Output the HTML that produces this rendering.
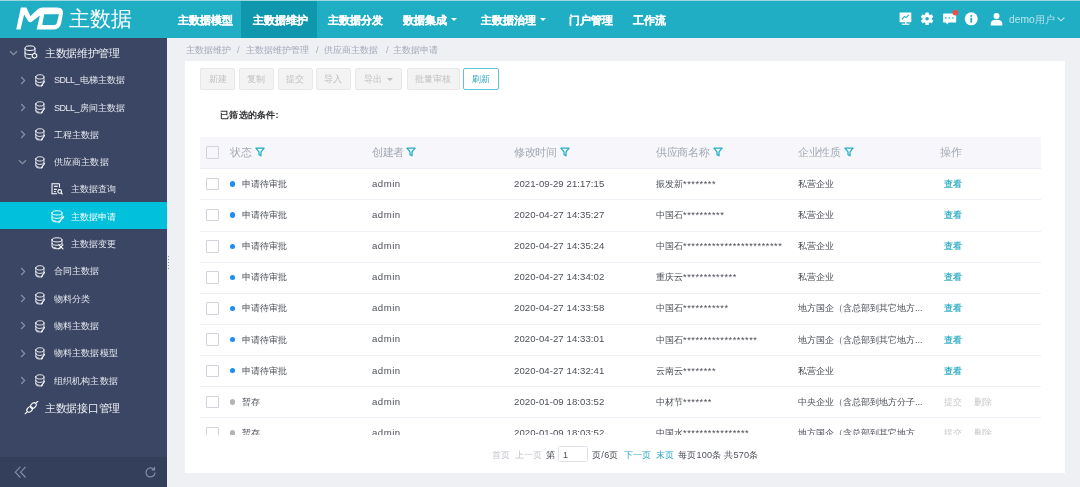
<!DOCTYPE html><html><head><meta charset="utf-8"><style>

*{box-sizing:border-box;margin:0;padding:0}
html,body{width:1080px;height:487px;overflow:hidden;background:#eff0f4;font-family:'Liberation Sans',sans-serif}
.t{position:absolute;white-space:nowrap;line-height:14px;-webkit-font-smoothing:antialiased;will-change:transform}
.abs{position:absolute}

</style></head><body>
<div class="abs" style="left:0;top:0;width:1080px;height:38px;background:#20aec5"></div>
<div class="abs" style="left:0;top:0;width:1080px;height:1px;background:#9fd6e0"></div>
<div class="abs" style="left:241px;top:1px;width:76px;height:37px;background:#0f97ad"></div>
<svg class="abs" style="left:10px;top:2px" width="60" height="32" viewBox="0 0 913 487"><path fill="#fff" fill-rule="evenodd" d="M95,420 L165,85 L250,85 L310,215 L420,110 Q450,85 500,85 L720,85 Q815,85 805,180 L780,320 Q760,420 650,420 L405,420 L455,205 L330,300 Q300,320 275,290 L215,190 L160,420 Z M520,185 L745,185 L712,325 Q705,350 675,350 L490,350 Z"/></svg>
<div class="t" style="left:69px;top:11.50px;font-size:21px;color:#fff;font-weight:normal;">主数据</div>
<div class="t" style="left:178px;top:13.30px;font-size:10.6px;color:#fff;font-weight:bold;-webkit-text-stroke:0.2px #fff">主数据模型</div>
<div class="t" style="left:253px;top:13.30px;font-size:10.6px;color:#fff;font-weight:bold;-webkit-text-stroke:0.2px #fff">主数据维护</div>
<div class="t" style="left:328px;top:13.30px;font-size:10.6px;color:#fff;font-weight:bold;-webkit-text-stroke:0.2px #fff">主数据分发</div>
<div class="t" style="left:403px;top:13.30px;font-size:10.6px;color:#fff;font-weight:bold;-webkit-text-stroke:0.2px #fff">数据集成</div>
<div class="t" style="left:481px;top:13.30px;font-size:10.6px;color:#fff;font-weight:bold;-webkit-text-stroke:0.2px #fff">主数据治理</div>
<div class="t" style="left:568.5px;top:13.30px;font-size:10.6px;color:#fff;font-weight:bold;-webkit-text-stroke:0.2px #fff">门户管理</div>
<div class="t" style="left:633px;top:13.30px;font-size:10.6px;color:#fff;font-weight:bold;-webkit-text-stroke:0.2px #fff">工作流</div>
<div class="abs" style="left:451px;top:18.2px;width:0;height:0;border-left:3px solid transparent;border-right:3px solid transparent;border-top:3.8px solid #fff"></div>
<div class="abs" style="left:539.6px;top:18.2px;width:0;height:0;border-left:3px solid transparent;border-right:3px solid transparent;border-top:3.8px solid #fff"></div>
<svg class="abs" style="left:895px;top:8px" width="175" height="24" viewBox="895 8 175 24"><rect x="899.6" y="12.6" width="11.7" height="9.6" rx="0.4" fill="#fff"/><polyline points="902,19.3 904.4,16.4 906,17.6 908.9,14.8" fill="none" stroke="#20aec5" stroke-width="1.1"/><rect x="905" y="22" width="1.3" height="2" fill="#fff"/><rect x="901.8" y="23.6" width="7.6" height="1.2" fill="#fff"/><g transform="translate(927.1,18.8)"><circle r="4.7" fill="#fff"/><rect x="-1.7" y="-6.3" width="3.4" height="3.2" rx="0.6" fill="#fff" transform="rotate(0)"/><rect x="-1.7" y="-6.3" width="3.4" height="3.2" rx="0.6" fill="#fff" transform="rotate(60)"/><rect x="-1.7" y="-6.3" width="3.4" height="3.2" rx="0.6" fill="#fff" transform="rotate(120)"/><rect x="-1.7" y="-6.3" width="3.4" height="3.2" rx="0.6" fill="#fff" transform="rotate(180)"/><rect x="-1.7" y="-6.3" width="3.4" height="3.2" rx="0.6" fill="#fff" transform="rotate(240)"/><rect x="-1.7" y="-6.3" width="3.4" height="3.2" rx="0.6" fill="#fff" transform="rotate(300)"/><circle r="1.8" fill="#20aec5"/></g><path d="M944,13.4 h11.3 a0.9,0.9 0 0 1 0.9,0.9 v7.4 a0.9,0.9 0 0 1 -0.9,0.9 h-6.6 l-1.7,1.8 l-1,-1.8 h-2 a0.9,0.9 0 0 1 -0.9,-0.9 v-7.4 a0.9,0.9 0 0 1 0.9,-0.9z" fill="#fff"/><rect x="945.1" y="17.3" width="1.4" height="1.4" fill="#20aec5"/><rect x="948.5" y="17.3" width="1.4" height="1.4" fill="#20aec5"/><rect x="952.1" y="17.3" width="1.4" height="1.4" fill="#20aec5"/><circle cx="955.4" cy="12.6" r="2.9" fill="#e8504a"/><circle cx="971.25" cy="18.8" r="6.5" fill="#fff"/><circle cx="971.25" cy="15.9" r="1" fill="#20aec5"/><rect x="970.35" y="17.8" width="1.8" height="4.8" fill="#20aec5"/><circle cx="996.5" cy="16" r="3" fill="#fff"/><path d="M990.7,25.5 v-1.8 q0,-4 5.8,-4 q5.8,0 5.8,4 v1.8z" fill="#fff"/><polyline points="1057.6,17.5 1061,20.8 1064.4,17.5" fill="none" stroke="#b9e4ec" stroke-width="1.1"/></svg>
<div class="t" style="left:1008.7px;top:12.50px;font-size:9.5px;color:#b9e4ec;font-weight:normal;"><span style="font-size:10.3px">demo</span>用户</div>
<div class="abs" style="left:0;top:38px;width:167px;height:449px;background:#3b4664"></div>
<div class="abs" style="left:0;top:457px;width:167px;height:30px;background:#343f5c"></div>
<div class="abs" style="left:0;top:202.2px;width:167px;height:27.3px;background:#00c0dc"></div>
<svg class="abs" style="left:8.9px;top:48.8px" width="9" height="8" viewBox="0 0 9 8"><polyline points="1,2.2 4.5,5.6 8,2.2" fill="none" stroke="#8a91a5" stroke-width="1.2"/></svg>
<svg class="abs" style="left:24.2px;top:45.2px;overflow:visible" width="13" height="14" viewBox="0 0 13 14"><g fill="none" stroke="#fff" stroke-width="1"><ellipse cx="6" cy="3.2" rx="5" ry="2.3"/><path d="M1,3.2 v8 q0,2.2 5,2.2 q0.6,0 1.2,-0.05"/><path d="M11,3.2 v4.6"/><path d="M1,7.4 q0,2.1 5,2.1 q1.2,0 2.2,-0.15"/><path d="M10.5,8.2 l2.2,1.25 v2.5 l-2.2,1.25 l-2.2,-1.25 v-2.5z" stroke-width="1.1"/></g></svg>
<div class="t" style="left:44.7px;top:45.80px;font-size:11px;color:#eef0f5;font-weight:normal;letter-spacing:-0.35px">主数据维护管理</div>
<svg class="abs" style="left:19.5px;top:75.5px" width="6" height="9" viewBox="0 0 6 9"><polyline points="1.2,1 4.6,4.5 1.2,8" fill="none" stroke="#8a91a5" stroke-width="1.2"/></svg>
<svg class="abs" style="left:35.2px;top:73.6px;overflow:visible" width="9.8" height="12.6" viewBox="0 0 12 13" preserveAspectRatio="none"><g fill="none" stroke="#fff" stroke-width="0.95" stroke-linecap="round"><path d="M1,3 q0,-2.2 5,-2.2 q5,0 5,2.2 q0,2.2 -5,2.2 q-5,0 -5,-2.2z"/><path d="M1,3 v7.2 q0,2.2 5,2.2 q2,0 3.2,-0.4"/><path d="M11,3 v4.6"/><path d="M1,6.6 q0,2.1 5,2.1 q4,0 4.8,-1.5"/><path d="M1,9.6 q0,1.8 4,2" stroke-width="0.8"/><path d="M11.6,7.8 l-3.8,4.3" stroke-width="1.3"/></g></svg>
<div class="t" style="left:54px;top:73.00px;font-size:9.1px;color:#e6e9f0;font-weight:normal;letter-spacing:0.12px"><span style="letter-spacing:-0.55px;margin-right:0.5px">SDLL_</span>电梯主数据</div>
<svg class="abs" style="left:19.5px;top:103.0px" width="6" height="9" viewBox="0 0 6 9"><polyline points="1.2,1 4.6,4.5 1.2,8" fill="none" stroke="#8a91a5" stroke-width="1.2"/></svg>
<svg class="abs" style="left:35.2px;top:101.1px;overflow:visible" width="9.8" height="12.6" viewBox="0 0 12 13" preserveAspectRatio="none"><g fill="none" stroke="#fff" stroke-width="0.95" stroke-linecap="round"><path d="M1,3 q0,-2.2 5,-2.2 q5,0 5,2.2 q0,2.2 -5,2.2 q-5,0 -5,-2.2z"/><path d="M1,3 v7.2 q0,2.2 5,2.2 q2,0 3.2,-0.4"/><path d="M11,3 v4.6"/><path d="M1,6.6 q0,2.1 5,2.1 q4,0 4.8,-1.5"/><path d="M1,9.6 q0,1.8 4,2" stroke-width="0.8"/><path d="M11.6,7.8 l-3.8,4.3" stroke-width="1.3"/></g></svg>
<div class="t" style="left:54px;top:100.50px;font-size:9.1px;color:#e6e9f0;font-weight:normal;letter-spacing:0.12px"><span style="letter-spacing:-0.55px;margin-right:0.5px">SDLL_</span>房间主数据</div>
<svg class="abs" style="left:19.5px;top:130.3px" width="6" height="9" viewBox="0 0 6 9"><polyline points="1.2,1 4.6,4.5 1.2,8" fill="none" stroke="#8a91a5" stroke-width="1.2"/></svg>
<svg class="abs" style="left:35.2px;top:128.4px;overflow:visible" width="9.8" height="12.6" viewBox="0 0 12 13" preserveAspectRatio="none"><g fill="none" stroke="#fff" stroke-width="0.95" stroke-linecap="round"><path d="M1,3 q0,-2.2 5,-2.2 q5,0 5,2.2 q0,2.2 -5,2.2 q-5,0 -5,-2.2z"/><path d="M1,3 v7.2 q0,2.2 5,2.2 q2,0 3.2,-0.4"/><path d="M11,3 v4.6"/><path d="M1,6.6 q0,2.1 5,2.1 q4,0 4.8,-1.5"/><path d="M1,9.6 q0,1.8 4,2" stroke-width="0.8"/><path d="M11.6,7.8 l-3.8,4.3" stroke-width="1.3"/></g></svg>
<div class="t" style="left:54px;top:127.80px;font-size:9.1px;color:#e6e9f0;font-weight:normal;letter-spacing:0.12px">工程主数据</div>
<svg class="abs" style="left:17.5px;top:158.1px" width="9" height="8" viewBox="0 0 9 8"><polyline points="1,2.2 4.5,5.6 8,2.2" fill="none" stroke="#8a91a5" stroke-width="1.2"/></svg>
<svg class="abs" style="left:35.2px;top:155.7px;overflow:visible" width="9.8" height="12.6" viewBox="0 0 12 13" preserveAspectRatio="none"><g fill="none" stroke="#fff" stroke-width="0.95" stroke-linecap="round"><path d="M1,3 q0,-2.2 5,-2.2 q5,0 5,2.2 q0,2.2 -5,2.2 q-5,0 -5,-2.2z"/><path d="M1,3 v7.2 q0,2.2 5,2.2 q2,0 3.2,-0.4"/><path d="M11,3 v4.6"/><path d="M1,6.6 q0,2.1 5,2.1 q4,0 4.8,-1.5"/><path d="M1,9.6 q0,1.8 4,2" stroke-width="0.8"/><path d="M11.6,7.8 l-3.8,4.3" stroke-width="1.3"/></g></svg>
<div class="t" style="left:54px;top:155.10px;font-size:9.1px;color:#e6e9f0;font-weight:normal;letter-spacing:0.12px">供应商主数据</div>
<svg class="abs" style="left:19.5px;top:266.8px" width="6" height="9" viewBox="0 0 6 9"><polyline points="1.2,1 4.6,4.5 1.2,8" fill="none" stroke="#8a91a5" stroke-width="1.2"/></svg>
<svg class="abs" style="left:35.2px;top:264.90000000000003px;overflow:visible" width="9.8" height="12.6" viewBox="0 0 12 13" preserveAspectRatio="none"><g fill="none" stroke="#fff" stroke-width="0.95" stroke-linecap="round"><path d="M1,3 q0,-2.2 5,-2.2 q5,0 5,2.2 q0,2.2 -5,2.2 q-5,0 -5,-2.2z"/><path d="M1,3 v7.2 q0,2.2 5,2.2 q2,0 3.2,-0.4"/><path d="M11,3 v4.6"/><path d="M1,6.6 q0,2.1 5,2.1 q4,0 4.8,-1.5"/><path d="M1,9.6 q0,1.8 4,2" stroke-width="0.8"/><path d="M11.6,7.8 l-3.8,4.3" stroke-width="1.3"/></g></svg>
<div class="t" style="left:54px;top:264.30px;font-size:9.1px;color:#e6e9f0;font-weight:normal;letter-spacing:0.12px">合同主数据</div>
<svg class="abs" style="left:19.5px;top:294.1px" width="6" height="9" viewBox="0 0 6 9"><polyline points="1.2,1 4.6,4.5 1.2,8" fill="none" stroke="#8a91a5" stroke-width="1.2"/></svg>
<svg class="abs" style="left:35.2px;top:292.20000000000005px;overflow:visible" width="9.8" height="12.6" viewBox="0 0 12 13" preserveAspectRatio="none"><g fill="none" stroke="#fff" stroke-width="0.95" stroke-linecap="round"><path d="M1,3 q0,-2.2 5,-2.2 q5,0 5,2.2 q0,2.2 -5,2.2 q-5,0 -5,-2.2z"/><path d="M1,3 v7.2 q0,2.2 5,2.2 q2,0 3.2,-0.4"/><path d="M11,3 v4.6"/><path d="M1,6.6 q0,2.1 5,2.1 q4,0 4.8,-1.5"/><path d="M1,9.6 q0,1.8 4,2" stroke-width="0.8"/><path d="M11.6,7.8 l-3.8,4.3" stroke-width="1.3"/></g></svg>
<div class="t" style="left:54px;top:291.60px;font-size:9.1px;color:#e6e9f0;font-weight:normal;letter-spacing:0.12px">物料分类</div>
<svg class="abs" style="left:19.5px;top:321.4px" width="6" height="9" viewBox="0 0 6 9"><polyline points="1.2,1 4.6,4.5 1.2,8" fill="none" stroke="#8a91a5" stroke-width="1.2"/></svg>
<svg class="abs" style="left:35.2px;top:319.5px;overflow:visible" width="9.8" height="12.6" viewBox="0 0 12 13" preserveAspectRatio="none"><g fill="none" stroke="#fff" stroke-width="0.95" stroke-linecap="round"><path d="M1,3 q0,-2.2 5,-2.2 q5,0 5,2.2 q0,2.2 -5,2.2 q-5,0 -5,-2.2z"/><path d="M1,3 v7.2 q0,2.2 5,2.2 q2,0 3.2,-0.4"/><path d="M11,3 v4.6"/><path d="M1,6.6 q0,2.1 5,2.1 q4,0 4.8,-1.5"/><path d="M1,9.6 q0,1.8 4,2" stroke-width="0.8"/><path d="M11.6,7.8 l-3.8,4.3" stroke-width="1.3"/></g></svg>
<div class="t" style="left:54px;top:318.90px;font-size:9.1px;color:#e6e9f0;font-weight:normal;letter-spacing:0.12px">物料主数据</div>
<svg class="abs" style="left:19.5px;top:348.7px" width="6" height="9" viewBox="0 0 6 9"><polyline points="1.2,1 4.6,4.5 1.2,8" fill="none" stroke="#8a91a5" stroke-width="1.2"/></svg>
<svg class="abs" style="left:35.2px;top:346.8px;overflow:visible" width="9.8" height="12.6" viewBox="0 0 12 13" preserveAspectRatio="none"><g fill="none" stroke="#fff" stroke-width="0.95" stroke-linecap="round"><path d="M1,3 q0,-2.2 5,-2.2 q5,0 5,2.2 q0,2.2 -5,2.2 q-5,0 -5,-2.2z"/><path d="M1,3 v7.2 q0,2.2 5,2.2 q2,0 3.2,-0.4"/><path d="M11,3 v4.6"/><path d="M1,6.6 q0,2.1 5,2.1 q4,0 4.8,-1.5"/><path d="M1,9.6 q0,1.8 4,2" stroke-width="0.8"/><path d="M11.6,7.8 l-3.8,4.3" stroke-width="1.3"/></g></svg>
<div class="t" style="left:54px;top:346.20px;font-size:9.1px;color:#e6e9f0;font-weight:normal;letter-spacing:0.12px">物料主数据模型</div>
<svg class="abs" style="left:19.5px;top:376.0px" width="6" height="9" viewBox="0 0 6 9"><polyline points="1.2,1 4.6,4.5 1.2,8" fill="none" stroke="#8a91a5" stroke-width="1.2"/></svg>
<svg class="abs" style="left:35.2px;top:374.1px;overflow:visible" width="9.8" height="12.6" viewBox="0 0 12 13" preserveAspectRatio="none"><g fill="none" stroke="#fff" stroke-width="0.95" stroke-linecap="round"><path d="M1,3 q0,-2.2 5,-2.2 q5,0 5,2.2 q0,2.2 -5,2.2 q-5,0 -5,-2.2z"/><path d="M1,3 v7.2 q0,2.2 5,2.2 q2,0 3.2,-0.4"/><path d="M11,3 v4.6"/><path d="M1,6.6 q0,2.1 5,2.1 q4,0 4.8,-1.5"/><path d="M1,9.6 q0,1.8 4,2" stroke-width="0.8"/><path d="M11.6,7.8 l-3.8,4.3" stroke-width="1.3"/></g></svg>
<div class="t" style="left:54px;top:373.50px;font-size:9.1px;color:#e6e9f0;font-weight:normal;letter-spacing:0.12px">组织机构主数据</div>
<svg class="abs" style="left:50.8px;top:182.8px;overflow:visible" width="12" height="11.5" viewBox="0 0 12 12"><g fill="none" stroke="#fff" stroke-width="1.1"><path d="M8.6,0.8 h-7.8 v10.4 h5.2"/><path d="M8.6,0.8 v4"/><path d="M2.8,3.4 h4" stroke-width="1.2"/><path d="M2.8,6.6 h3" stroke-width="1.2"/><path d="M2.8,9 h2.2" stroke-width="1"/><circle cx="8.8" cy="8.8" r="1.9"/><path d="M10.2,10.2 l1.6,1.6" stroke-width="1.2"/></g></svg>
<svg class="abs" style="left:50.7px;top:210px;overflow:visible" width="12" height="12.5" viewBox="0 0 12 13" preserveAspectRatio="none"><g fill="none" stroke="#fff" stroke-width="0.95" stroke-linecap="round"><path d="M1,3 q0,-2.2 5,-2.2 q5,0 5,2.2 q0,2.2 -5,2.2 q-5,0 -5,-2.2z"/><path d="M1,3 v7.2 q0,2.2 5,2.2 q2,0 3.2,-0.4"/><path d="M11,3 v4.6"/><path d="M1,6.6 q0,2.1 5,2.1 q4,0 4.8,-1.5"/><path d="M1,9.6 q0,1.8 4,2" stroke-width="0.8"/><path d="M12.6,7 l-4.6,5.6" stroke-width="1.4"/></g></svg>
<svg class="abs" style="left:50.7px;top:237.4px;overflow:visible" width="12" height="12.3" viewBox="0 0 12 13" preserveAspectRatio="none"><g fill="none" stroke="#fff" stroke-width="0.95" stroke-linecap="round"><path d="M1,3 q0,-2.2 5,-2.2 q5,0 5,2.2 q0,2.2 -5,2.2 q-5,0 -5,-2.2z"/><path d="M1,3 v7.2 q0,2.2 5,2.2 q2,0 3.2,-0.4"/><path d="M11,3 v4.6"/><path d="M1,6.6 q0,2.1 5,2.1 q4,0 4.8,-1.5"/><path d="M1,9.6 q0,1.8 4,2" stroke-width="0.8"/><path d="M7.8,8.3 l4.2,4.2 M12,8.3 l-4.2,4.2" stroke-width="1.1"/></g></svg>
<div class="t" style="left:70.8px;top:182.40px;font-size:9.1px;color:#e6e9f0;font-weight:normal;">主数据查询</div>
<div class="t" style="left:70.8px;top:209.90px;font-size:9.1px;color:#fff;font-weight:normal;">主数据申请</div>
<div class="t" style="left:70.8px;top:237.20px;font-size:9.1px;color:#e6e9f0;font-weight:normal;">主数据变更</div>
<svg class="abs" style="left:24px;top:401px" width="15" height="14" viewBox="0 0 15 14"><g fill="none" stroke="#fff" stroke-width="1.1"><ellipse cx="5.6" cy="8.4" rx="3.2" ry="2.3" transform="rotate(-45 5.6 8.4)"/><ellipse cx="9.4" cy="4.6" rx="3.2" ry="2.3" transform="rotate(-45 9.4 4.6)"/><path d="M0.8,13.2 l2.4,-2.4"/><path d="M11.8,2.2 l2.4,-2.2"/></g></svg>
<div class="t" style="left:44.8px;top:401.00px;font-size:11px;color:#eef0f5;font-weight:normal;letter-spacing:-0.3px">主数据接口管理</div>
<svg class="abs" style="left:14px;top:466px" width="14" height="13" viewBox="0 0 14 13"><g fill="none" stroke="#8890a6" stroke-width="1.1"><polyline points="6.3,0.9 1.3,6.2 6.3,11.5"/><polyline points="11.6,0.9 6.6,6.2 11.6,11.5"/></g></svg>
<svg class="abs" style="left:144px;top:466px" width="13" height="13" viewBox="0 0 13 13"><g fill="none" stroke="#8890a6" stroke-width="1.2"><path d="M11,6.5 a4.5,4.5 0 1 1 -1.3,-3.2"/><polyline points="10.5,1 10.5,3.8 7.7,3.8"/></g></svg>
<div class="abs" style="left:167.6px;top:255.6px;width:1.9px;height:1.9px;background:#8d939e"></div>
<div class="abs" style="left:167.6px;top:258.6px;width:1.9px;height:1.9px;background:#8d939e"></div>
<div class="abs" style="left:167.6px;top:261.6px;width:1.9px;height:1.9px;background:#8d939e"></div>
<div class="abs" style="left:167.6px;top:264.6px;width:1.9px;height:1.9px;background:#8d939e"></div>
<div class="abs" style="left:167.6px;top:267.6px;width:1.9px;height:1.9px;background:#8d939e"></div>
<div class="t" style="left:185.5px;top:43.40px;font-size:9.1px;color:#a3a9b8;font-weight:normal;">主数据维护</div>
<div class="t" style="left:237px;top:43.40px;font-size:9.1px;color:#a3a9b8;font-weight:normal;">/</div>
<div class="t" style="left:245.5px;top:43.40px;font-size:9.1px;color:#a3a9b8;font-weight:normal;">主数据维护管理</div>
<div class="t" style="left:316px;top:43.40px;font-size:9.1px;color:#a3a9b8;font-weight:normal;">/</div>
<div class="t" style="left:323.75px;top:43.40px;font-size:9.1px;color:#a3a9b8;font-weight:normal;">供应商主数据</div>
<div class="t" style="left:385.5px;top:43.40px;font-size:9.1px;color:#a3a9b8;font-weight:normal;">/</div>
<div class="t" style="left:393px;top:43.40px;font-size:9.1px;color:#a3a9b8;font-weight:normal;">主数据申请</div>
<div class="abs" style="left:185px;top:61px;width:880px;height:411.5px;background:#fff"></div>
<div class="abs" style="left:200.2px;top:68.3px;width:35px;height:21.3px;background:#f3f3f3;border:1px solid #e8e8e8;border-radius:2px"></div>
<div class="t" style="left:208.6px;top:72.00px;font-size:9.1px;color:#c0c0c0;font-weight:normal;">新建</div>
<div class="abs" style="left:238.9px;top:68.3px;width:35px;height:21.3px;background:#f3f3f3;border:1px solid #e8e8e8;border-radius:2px"></div>
<div class="t" style="left:247.3px;top:72.00px;font-size:9.1px;color:#c0c0c0;font-weight:normal;">复制</div>
<div class="abs" style="left:277.7px;top:68.3px;width:35px;height:21.3px;background:#f3f3f3;border:1px solid #e8e8e8;border-radius:2px"></div>
<div class="t" style="left:286.09999999999997px;top:72.00px;font-size:9.1px;color:#c0c0c0;font-weight:normal;">提交</div>
<div class="abs" style="left:316px;top:68.3px;width:35px;height:21.3px;background:#f3f3f3;border:1px solid #e8e8e8;border-radius:2px"></div>
<div class="t" style="left:324.4px;top:72.00px;font-size:9.1px;color:#c0c0c0;font-weight:normal;">导入</div>
<div class="abs" style="left:354.9px;top:68.3px;width:47.6px;height:21.3px;background:#f3f3f3;border:1px solid #e8e8e8;border-radius:2px"></div>
<div class="t" style="left:363.9px;top:72.00px;font-size:9.1px;color:#c0c0c0;font-weight:normal;">导出</div>
<div class="abs" style="left:406.8px;top:68.3px;width:52.8px;height:21.3px;background:#f3f3f3;border:1px solid #e8e8e8;border-radius:2px"></div>
<div class="t" style="left:415.0px;top:72.00px;font-size:9.1px;color:#c0c0c0;font-weight:normal;">批量审核</div>
<div class="abs" style="left:500px;top:0"></div>
<div class="abs" style="left:387px;top:77.5px;width:0;height:0;border-left:3px solid transparent;border-right:3px solid transparent;border-top:3.6px solid #c0c0c0"></div>
<div class="abs" style="left:463.4px;top:68.3px;width:35.3px;height:21.3px;background:#fff;border:1px solid #5ec4d6;border-radius:2px"></div>
<div class="t" style="left:472.2px;top:72.00px;font-size:9.1px;color:#2aa8c0;font-weight:normal;">刷新</div>
<div class="t" style="left:220px;top:107.70px;font-size:9.3px;color:#303133;font-weight:bold;letter-spacing:0.25px">已筛选的条件:</div>
<div class="abs" style="left:200px;top:137px;width:840.6px;height:31.6px;background:#f7f7fb;border-bottom:1px solid #e9ecf2"></div>
<div class="abs" style="left:206.3px;top:146.10px;width:12.5px;height:12.5px;border:1px solid #cfd3dc;border-radius:1px"></div>
<div class="t" style="left:229.5px;top:144.80px;font-size:11px;color:#a3a8b3;font-weight:normal;letter-spacing:-0.35px">状态</div>
<svg class="abs" style="left:255px;top:146.5px" width="10" height="10" viewBox="0 0 10 10"><path d="M0.9,1.2 h8.2 l-3.1,3.7 v3.9 l-2,-1.1 v-2.8z" fill="none" stroke="#21aec5" stroke-width="1.25" stroke-linejoin="round"/></svg>
<div class="t" style="left:372px;top:144.80px;font-size:11px;color:#a3a8b3;font-weight:normal;letter-spacing:-0.35px">创建者</div>
<svg class="abs" style="left:406px;top:146.5px" width="10" height="10" viewBox="0 0 10 10"><path d="M0.9,1.2 h8.2 l-3.1,3.7 v3.9 l-2,-1.1 v-2.8z" fill="none" stroke="#21aec5" stroke-width="1.25" stroke-linejoin="round"/></svg>
<div class="t" style="left:514px;top:144.80px;font-size:11px;color:#a3a8b3;font-weight:normal;letter-spacing:-0.35px">修改时间</div>
<svg class="abs" style="left:560px;top:146.5px" width="10" height="10" viewBox="0 0 10 10"><path d="M0.9,1.2 h8.2 l-3.1,3.7 v3.9 l-2,-1.1 v-2.8z" fill="none" stroke="#21aec5" stroke-width="1.25" stroke-linejoin="round"/></svg>
<div class="t" style="left:656px;top:144.80px;font-size:11px;color:#a3a8b3;font-weight:normal;letter-spacing:-0.35px">供应商名称</div>
<svg class="abs" style="left:712.7px;top:146.5px" width="10" height="10" viewBox="0 0 10 10"><path d="M0.9,1.2 h8.2 l-3.1,3.7 v3.9 l-2,-1.1 v-2.8z" fill="none" stroke="#21aec5" stroke-width="1.25" stroke-linejoin="round"/></svg>
<div class="t" style="left:797.7px;top:144.80px;font-size:11px;color:#a3a8b3;font-weight:normal;letter-spacing:-0.35px">企业性质</div>
<svg class="abs" style="left:844px;top:146.5px" width="10" height="10" viewBox="0 0 10 10"><path d="M0.9,1.2 h8.2 l-3.1,3.7 v3.9 l-2,-1.1 v-2.8z" fill="none" stroke="#21aec5" stroke-width="1.25" stroke-linejoin="round"/></svg>
<div class="t" style="left:939.7px;top:144.80px;font-size:11px;color:#a3a8b3;font-weight:normal;letter-spacing:-0.35px">操作</div>
<div class="abs" style="left:200px;top:169.3px;width:840.6px;height:265.5px;overflow:hidden">
<div class="abs" style="left:0;top:0.00px;width:840.6px;height:31.12px;border-bottom:1px solid #edeff4">
<div class="abs" style="left:6.3px;top:8.50px;width:12.5px;height:12.5px;border:1px solid #cfd3dc;border-radius:1px"></div>
<div class="abs" style="left:29.7px;top:12.00px;width:5.4px;height:5.4px;border-radius:50%;background:#1b8df5"></div>
<div class="t" style="left:41.6px;top:7.70px;font-size:9.1px;color:#4c5058;font-weight:normal;">申请待审批</div>
<div class="t" style="left:172px;top:7.60px;font-size:9.6px;color:#4c5058;font-weight:normal;letter-spacing:0.5px">admin</div>
<div class="t" style="left:314px;top:7.60px;font-size:9.6px;color:#4c5058;font-weight:normal;letter-spacing:0.07px">2021-09-29 21:17:15</div>
<div class="t" style="left:456px;top:7.70px;font-size:9.1px;color:#4c5058;font-weight:normal;">振发新<span style="letter-spacing:0.6px">********</span></div>
<div class="t" style="left:597.7px;top:7.70px;font-size:9.1px;color:#4c5058;font-weight:normal;">私营企业</div>
<div class="t" style="left:743.6px;top:7.70px;font-size:9.1px;color:#1aa5be;font-weight:normal;-webkit-text-stroke:0.1px #1aa5be">查看</div>
</div>
<div class="abs" style="left:0;top:31.12px;width:840.6px;height:31.12px;border-bottom:1px solid #edeff4">
<div class="abs" style="left:6.3px;top:8.50px;width:12.5px;height:12.5px;border:1px solid #cfd3dc;border-radius:1px"></div>
<div class="abs" style="left:29.7px;top:12.00px;width:5.4px;height:5.4px;border-radius:50%;background:#1b8df5"></div>
<div class="t" style="left:41.6px;top:7.70px;font-size:9.1px;color:#4c5058;font-weight:normal;">申请待审批</div>
<div class="t" style="left:172px;top:7.60px;font-size:9.6px;color:#4c5058;font-weight:normal;letter-spacing:0.5px">admin</div>
<div class="t" style="left:314px;top:7.60px;font-size:9.6px;color:#4c5058;font-weight:normal;letter-spacing:0.07px">2020-04-27 14:35:27</div>
<div class="t" style="left:456px;top:7.70px;font-size:9.1px;color:#4c5058;font-weight:normal;">中国石<span style="letter-spacing:0.6px">**********</span></div>
<div class="t" style="left:597.7px;top:7.70px;font-size:9.1px;color:#4c5058;font-weight:normal;">私营企业</div>
<div class="t" style="left:743.6px;top:7.70px;font-size:9.1px;color:#1aa5be;font-weight:normal;-webkit-text-stroke:0.1px #1aa5be">查看</div>
</div>
<div class="abs" style="left:0;top:62.24px;width:840.6px;height:31.12px;border-bottom:1px solid #edeff4">
<div class="abs" style="left:6.3px;top:8.50px;width:12.5px;height:12.5px;border:1px solid #cfd3dc;border-radius:1px"></div>
<div class="abs" style="left:29.7px;top:12.00px;width:5.4px;height:5.4px;border-radius:50%;background:#1b8df5"></div>
<div class="t" style="left:41.6px;top:7.70px;font-size:9.1px;color:#4c5058;font-weight:normal;">申请待审批</div>
<div class="t" style="left:172px;top:7.60px;font-size:9.6px;color:#4c5058;font-weight:normal;letter-spacing:0.5px">admin</div>
<div class="t" style="left:314px;top:7.60px;font-size:9.6px;color:#4c5058;font-weight:normal;letter-spacing:0.07px">2020-04-27 14:35:24</div>
<div class="t" style="left:456px;top:7.70px;font-size:9.1px;color:#4c5058;font-weight:normal;">中国石<span style="letter-spacing:0.6px">************************</span></div>
<div class="t" style="left:597.7px;top:7.70px;font-size:9.1px;color:#4c5058;font-weight:normal;">私营企业</div>
<div class="t" style="left:743.6px;top:7.70px;font-size:9.1px;color:#1aa5be;font-weight:normal;-webkit-text-stroke:0.1px #1aa5be">查看</div>
</div>
<div class="abs" style="left:0;top:93.36px;width:840.6px;height:31.12px;border-bottom:1px solid #edeff4">
<div class="abs" style="left:6.3px;top:8.50px;width:12.5px;height:12.5px;border:1px solid #cfd3dc;border-radius:1px"></div>
<div class="abs" style="left:29.7px;top:12.00px;width:5.4px;height:5.4px;border-radius:50%;background:#1b8df5"></div>
<div class="t" style="left:41.6px;top:7.70px;font-size:9.1px;color:#4c5058;font-weight:normal;">申请待审批</div>
<div class="t" style="left:172px;top:7.60px;font-size:9.6px;color:#4c5058;font-weight:normal;letter-spacing:0.5px">admin</div>
<div class="t" style="left:314px;top:7.60px;font-size:9.6px;color:#4c5058;font-weight:normal;letter-spacing:0.07px">2020-04-27 14:34:02</div>
<div class="t" style="left:456px;top:7.70px;font-size:9.1px;color:#4c5058;font-weight:normal;">重庆云<span style="letter-spacing:0.6px">*************</span></div>
<div class="t" style="left:597.7px;top:7.70px;font-size:9.1px;color:#4c5058;font-weight:normal;">私营企业</div>
<div class="t" style="left:743.6px;top:7.70px;font-size:9.1px;color:#1aa5be;font-weight:normal;-webkit-text-stroke:0.1px #1aa5be">查看</div>
</div>
<div class="abs" style="left:0;top:124.48px;width:840.6px;height:31.12px;border-bottom:1px solid #edeff4">
<div class="abs" style="left:6.3px;top:8.50px;width:12.5px;height:12.5px;border:1px solid #cfd3dc;border-radius:1px"></div>
<div class="abs" style="left:29.7px;top:12.00px;width:5.4px;height:5.4px;border-radius:50%;background:#1b8df5"></div>
<div class="t" style="left:41.6px;top:7.70px;font-size:9.1px;color:#4c5058;font-weight:normal;">申请待审批</div>
<div class="t" style="left:172px;top:7.60px;font-size:9.6px;color:#4c5058;font-weight:normal;letter-spacing:0.5px">admin</div>
<div class="t" style="left:314px;top:7.60px;font-size:9.6px;color:#4c5058;font-weight:normal;letter-spacing:0.07px">2020-04-27 14:33:58</div>
<div class="t" style="left:456px;top:7.70px;font-size:9.1px;color:#4c5058;font-weight:normal;">中国石<span style="letter-spacing:0.6px">***********</span></div>
<div class="t" style="left:597.7px;top:7.70px;font-size:9.1px;color:#4c5058;font-weight:normal;">地方国企（含总部到其它地方...</div>
<div class="t" style="left:743.6px;top:7.70px;font-size:9.1px;color:#1aa5be;font-weight:normal;-webkit-text-stroke:0.1px #1aa5be">查看</div>
</div>
<div class="abs" style="left:0;top:155.60px;width:840.6px;height:31.12px;border-bottom:1px solid #edeff4">
<div class="abs" style="left:6.3px;top:8.50px;width:12.5px;height:12.5px;border:1px solid #cfd3dc;border-radius:1px"></div>
<div class="abs" style="left:29.7px;top:12.00px;width:5.4px;height:5.4px;border-radius:50%;background:#1b8df5"></div>
<div class="t" style="left:41.6px;top:7.70px;font-size:9.1px;color:#4c5058;font-weight:normal;">申请待审批</div>
<div class="t" style="left:172px;top:7.60px;font-size:9.6px;color:#4c5058;font-weight:normal;letter-spacing:0.5px">admin</div>
<div class="t" style="left:314px;top:7.60px;font-size:9.6px;color:#4c5058;font-weight:normal;letter-spacing:0.07px">2020-04-27 14:33:01</div>
<div class="t" style="left:456px;top:7.70px;font-size:9.1px;color:#4c5058;font-weight:normal;">中国石<span style="letter-spacing:0.6px">******************</span></div>
<div class="t" style="left:597.7px;top:7.70px;font-size:9.1px;color:#4c5058;font-weight:normal;">地方国企（含总部到其它地方...</div>
<div class="t" style="left:743.6px;top:7.70px;font-size:9.1px;color:#1aa5be;font-weight:normal;-webkit-text-stroke:0.1px #1aa5be">查看</div>
</div>
<div class="abs" style="left:0;top:186.72px;width:840.6px;height:31.12px;border-bottom:1px solid #edeff4">
<div class="abs" style="left:6.3px;top:8.50px;width:12.5px;height:12.5px;border:1px solid #cfd3dc;border-radius:1px"></div>
<div class="abs" style="left:29.7px;top:12.00px;width:5.4px;height:5.4px;border-radius:50%;background:#1b8df5"></div>
<div class="t" style="left:41.6px;top:7.70px;font-size:9.1px;color:#4c5058;font-weight:normal;">申请待审批</div>
<div class="t" style="left:172px;top:7.60px;font-size:9.6px;color:#4c5058;font-weight:normal;letter-spacing:0.5px">admin</div>
<div class="t" style="left:314px;top:7.60px;font-size:9.6px;color:#4c5058;font-weight:normal;letter-spacing:0.07px">2020-04-27 14:32:41</div>
<div class="t" style="left:456px;top:7.70px;font-size:9.1px;color:#4c5058;font-weight:normal;">云南云<span style="letter-spacing:0.6px">********</span></div>
<div class="t" style="left:597.7px;top:7.70px;font-size:9.1px;color:#4c5058;font-weight:normal;">私营企业</div>
<div class="t" style="left:743.6px;top:7.70px;font-size:9.1px;color:#1aa5be;font-weight:normal;-webkit-text-stroke:0.1px #1aa5be">查看</div>
</div>
<div class="abs" style="left:0;top:217.84px;width:840.6px;height:31.12px;border-bottom:1px solid #edeff4">
<div class="abs" style="left:6.3px;top:8.50px;width:12.5px;height:12.5px;border:1px solid #cfd3dc;border-radius:1px"></div>
<div class="abs" style="left:29.7px;top:12.00px;width:5.4px;height:5.4px;border-radius:50%;background:#b4b4b8"></div>
<div class="t" style="left:41.6px;top:7.70px;font-size:9.1px;color:#4c5058;font-weight:normal;">暂存</div>
<div class="t" style="left:172px;top:7.60px;font-size:9.6px;color:#4c5058;font-weight:normal;letter-spacing:0.5px">admin</div>
<div class="t" style="left:314px;top:7.60px;font-size:9.6px;color:#4c5058;font-weight:normal;letter-spacing:0.07px">2020-01-09 18:03:52</div>
<div class="t" style="left:456px;top:7.70px;font-size:9.1px;color:#4c5058;font-weight:normal;">中材节<span style="letter-spacing:0.6px">*******</span></div>
<div class="t" style="left:597.7px;top:7.70px;font-size:9.1px;color:#4c5058;font-weight:normal;">中央企业（含总部到地方分子...</div>
<div class="t" style="left:744.2px;top:7.70px;font-size:9.1px;color:#c8c8cc;font-weight:normal;">提交</div>
<div class="t" style="left:773.6px;top:7.70px;font-size:9.1px;color:#c8c8cc;font-weight:normal;">删除</div>
</div>
<div class="abs" style="left:0;top:248.96px;width:840.6px;height:31.12px;border-bottom:1px solid #edeff4">
<div class="abs" style="left:6.3px;top:8.50px;width:12.5px;height:12.5px;border:1px solid #cfd3dc;border-radius:1px"></div>
<div class="abs" style="left:29.7px;top:12.00px;width:5.4px;height:5.4px;border-radius:50%;background:#b4b4b8"></div>
<div class="t" style="left:41.6px;top:7.70px;font-size:9.1px;color:#4c5058;font-weight:normal;">暂存</div>
<div class="t" style="left:172px;top:7.60px;font-size:9.6px;color:#4c5058;font-weight:normal;letter-spacing:0.5px">admin</div>
<div class="t" style="left:314px;top:7.60px;font-size:9.6px;color:#4c5058;font-weight:normal;letter-spacing:0.07px">2020-01-09 18:03:52</div>
<div class="t" style="left:456px;top:7.70px;font-size:9.1px;color:#4c5058;font-weight:normal;">中国水<span style="letter-spacing:0.6px">****************</span></div>
<div class="t" style="left:597.7px;top:7.70px;font-size:9.1px;color:#4c5058;font-weight:normal;">地方国企（含总部到其它地方...</div>
<div class="t" style="left:744.2px;top:7.70px;font-size:9.1px;color:#c8c8cc;font-weight:normal;">提交</div>
<div class="t" style="left:773.6px;top:7.70px;font-size:9.1px;color:#c8c8cc;font-weight:normal;">删除</div>
</div>
</div>
<div class="t" style="left:491.7px;top:448.00px;font-size:9.1px;color:#c0c4cc;font-weight:normal;">首页</div>
<div class="t" style="left:514.7px;top:448.00px;font-size:9.1px;color:#c0c4cc;font-weight:normal;">上一页</div>
<div class="t" style="left:546px;top:448.00px;font-size:9.1px;color:#4c5058;font-weight:normal;">第</div>
<div class="t" style="left:591.7px;top:448.00px;font-size:9.1px;color:#4c5058;font-weight:normal;"><span style="letter-spacing:0.3px">页/6页</span></div>
<div class="t" style="left:624px;top:448.00px;font-size:9.1px;color:#2aa8c0;font-weight:normal;">下一页</div>
<div class="t" style="left:655.5px;top:448.00px;font-size:9.1px;color:#2aa8c0;font-weight:normal;">末页</div>
<div class="t" style="left:678px;top:448.00px;font-size:9.1px;color:#4c5058;font-weight:normal;"><span style="letter-spacing:0.22px">每页100条 共570条</span></div>
<div class="abs" style="left:557.9px;top:446.2px;width:30.5px;height:15.6px;border:1px solid #dfe2e8;border-radius:1.5px;background:#fff"></div>
<div class="t" style="left:563px;top:447.50px;font-size:9.1px;color:#4c5058;font-weight:normal;">1</div>
</body></html>
